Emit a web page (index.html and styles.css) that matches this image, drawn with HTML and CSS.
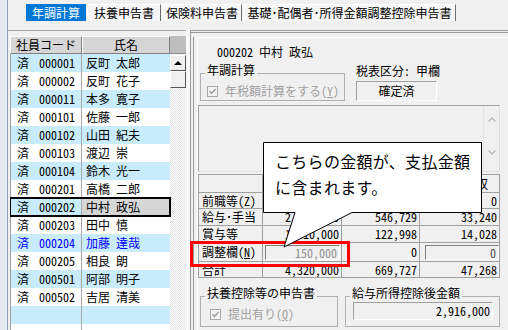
FILE: index.html
```html
<!DOCTYPE html>
<html lang="ja">
<head>
<meta charset="utf-8">
<title>年調計算</title>
<link rel="stylesheet" href="styles.css">
</head>
<body>
<div class="app">
  <div class="strip"></div>
  <div class="main">
    <div class="tabs">
      <div class="tab on w1">年調計算</div>
      <div class="tab w2">扶養申告書</div>
      <div class="tab w3">保険料申告書</div>
      <div class="tab w4">基礎･配偶者･所得金額調整控除申告書</div>
    </div>
    <div class="content">
      <div class="listpane">
        <div class="ghead">
          <div class="hc hc1">社員コード</div>
          <div class="hc hc2">氏名</div>
          <div class="hfill"></div>
        </div>
        <div class="gbody">
          <div class="rows">
            <div class="row alt"><div class="c1"><span>済</span><span class="cd">000001</span></div><div class="c2">反町 太郎</div></div>
            <div class="row"><div class="c1"><span>済</span><span class="cd">000002</span></div><div class="c2">反町 花子</div></div>
            <div class="row alt"><div class="c1"><span>済</span><span class="cd">000011</span></div><div class="c2">本多 寛子</div></div>
            <div class="row"><div class="c1"><span>済</span><span class="cd">000101</span></div><div class="c2">佐藤 一郎</div></div>
            <div class="row alt"><div class="c1"><span>済</span><span class="cd">000102</span></div><div class="c2">山田 紀夫</div></div>
            <div class="row"><div class="c1"><span>済</span><span class="cd">000103</span></div><div class="c2">渡辺 崇</div></div>
            <div class="row alt"><div class="c1"><span>済</span><span class="cd">000104</span></div><div class="c2">鈴木 光一</div></div>
            <div class="row"><div class="c1"><span>済</span><span class="cd">000201</span></div><div class="c2">高橋 二郎</div></div>
            <div class="row alt sel"><div class="c1"><span>済</span><span class="cd">000202</span></div><div class="c2">中村 政弘</div></div>
            <div class="row"><div class="c1"><span>済</span><span class="cd">000203</span></div><div class="c2">田中 慎</div></div>
            <div class="row alt blue"><div class="c1"><span>済</span><span class="cd">000204</span></div><div class="c2">加藤 達哉</div></div>
            <div class="row"><div class="c1"><span>済</span><span class="cd">000205</span></div><div class="c2">相良 朗</div></div>
            <div class="row alt"><div class="c1"><span>済</span><span class="cd">000501</span></div><div class="c2">阿部 明子</div></div>
            <div class="row"><div class="c1"><span>済</span><span class="cd">000502</span></div><div class="c2">吉居 清美</div></div>
            <div class="row alt"><div class="c1"></div><div class="c2"></div></div>
            <div class="row"><div class="c1"></div><div class="c2"></div></div>
          </div>
          <div class="vscroll">
            <div class="sbtn"><span class="tri"></span></div>
            <div class="sthumb"></div>
            <div class="strack"></div>
          </div>
        </div>
      </div>
      <div class="splitter"></div>
      <div class="detail">
        <div class="dpanel">
          <div class="dinner">
            <div class="idline">000202 中村 政弘</div>
            <div class="toprow">
              <fieldset class="grp g1">
                <legend>年調計算</legend>
                <div class="chk dis c-g1">
                  <svg class="cb" width="11" height="11" viewBox="0 0 11 11"><rect x="0.5" y="0.5" width="10" height="10" fill="#f4f4f4" stroke="#a8a8a8"/><path d="M2.5 5.2 L4.6 7.4 L8.6 3" fill="none" stroke="#a0a0a0" stroke-width="1.6"/></svg>
                  <span>年税額計算をする(<u>Y</u>)</span>
                </div>
              </fieldset>
              <div class="taxcol">
                <div class="taxlbl">税表区分: 甲欄</div>
                <div class="status">確定済</div>
              </div>
            </div>
            <div class="memo">
              <div class="memo-main"></div>
              <div class="memo-scroll">
                <svg width="8" height="5" viewBox="0 0 8 5"><polyline points="0.5,4.5 4,1 7.5,4.5" fill="none" stroke="#b4b4b4" stroke-width="1.2"/></svg>
                <svg width="8" height="5" viewBox="0 0 8 5"><polyline points="0.5,0.5 4,4 7.5,0.5" fill="none" stroke="#b4b4b4" stroke-width="1.2"/></svg>
              </div>
            </div>
            <div class="amt">
              <div class="lb"></div><div class="hd"></div><div class="hd"></div><div class="hd hd4">徴収</div>
              <div class="lb">前職等(Z)</div><div></div><div></div><div>0</div>
              <div class="lb">給与･手当</div><div>2,760,000</div><div>546,729</div><div>33,240</div>
              <div class="lb">賞与等</div><div>1,410,000</div><div>122,998</div><div>14,028</div>
              <div class="lb">調整欄(<u>N</u>)</div><div class="inb"><span class="ibox gray">150,000</span></div><div>0</div><div class="inb inb4"><span class="ibox">0</span></div>
              <div class="lb">合計</div><div>4,320,000</div><div>669,727</div><div>47,268</div>
            </div>
            <div class="botrow">
              <fieldset class="grp g3">
                <legend>扶養控除等の申告書</legend>
                <div class="chk dis c-g3">
                  <svg class="cb" width="11" height="11" viewBox="0 0 11 11"><rect x="0.5" y="0.5" width="10" height="10" fill="#f4f4f4" stroke="#a8a8a8"/><path d="M2.5 5.2 L4.6 7.4 L8.6 3" fill="none" stroke="#a0a0a0" stroke-width="1.6"/></svg>
                  <span>提出有り(<u>Q</u>)</span>
                </div>
              </fieldset>
              <fieldset class="grp g4">
                <legend>給与所得控除後金額</legend>
                <div class="valbox">2,916,000</div>
              </fieldset>
            </div>
          </div>
        </div>
      </div>
    </div>
  </div>
  <div class="redbox"></div>
  <div class="callout">
    <svg class="callout-shape" width="221" height="106" viewBox="0 0 221 106"><path d="M0.5,0.5 H218.5 V70.5 H89 L21,105 L32,70.5 H0.5 Z" fill="#fff" stroke="#000" stroke-width="1"/></svg>
    <div class="ctext">こちらの金額が、支払金額<br>に含まれます。</div>
  </div>
</div>
</body>
</html>
```

FILE: styles.css
```css
* { box-sizing: border-box; }
html, body { margin: 0; padding: 0; }
body {
  width: 508px;
  height: 330px;
  overflow: hidden;
  background: #f0f0f0;
  font-family: "Noto Sans CJK JP", "Noto Sans", sans-serif;
  font-size: 12px;
  line-height: 14px;
  color: #000;
  font-feature-settings: "hwid" 1;
}
.app { position: relative; display: flex; height: 330px; }
.strip { width: 8px; flex: none; background: #e4eaf1; border-right: 1px solid #8e9fb3; }
.main { flex: 1; display: flex; flex-direction: column; min-width: 0; }

/* tabs */
.tabs { display: flex; height: 17px; margin: 4px 0 9px 18px; flex: none; }
.tab {
  height: 17px;
  border-top: 1px solid #fff;
  border-left: 1px solid #fff;
  border-right: 1px solid #6e6e6e;
  background: #f5f5f5;
  text-align: center;
  line-height: 15px;
  margin-right: 1px;
  white-space: nowrap;
  flex: none;
}
.tab.on { background: #0078d7; color: #fff; border-color: #0078d7; }
.w1 { width: 60px; }
.w2 { width: 74px; }
.w3 { width: 80px; }
.w4 { width: 213px; }

.content { flex: 1; display: flex; min-height: 0; }

/* employee list */
.listpane {
  width: 178px; flex: none;
  border-top: 1px solid #a0a0a0;
  padding: 5px 0 0 2px;
  display: flex; flex-direction: column;
  overflow: hidden;
}
.ghead { display: flex; height: 18px; flex: none; }
.hc {
  height: 18px;
  background: #d6d6d6;
  border-top: 1px solid #fff;
  border-left: 1px solid #fff;
  border-right: 1px solid #808080;
  border-bottom: 1px solid #808080;
  text-align: center;
  line-height: 16px;
}
.hc1 { width: 72px; }
.hc2 { width: 88px; }
.hfill { width: 16px; background: #bebebe; border-bottom: 1px solid #909090; }
.gbody { flex: 1; display: flex; min-height: 0; overflow: hidden; }
.rows { width: 160px; flex: none; }
.row { display: flex; height: 18px; background: #fff; line-height: 18px; }
.row.alt { background: #c8ecfb; }
.row.blue { color: #0000ff; }
.c1 {
  width: 72px; flex: none;
  border-left: 1px solid #a0a0a0;
  border-right: 1px solid #a8a8a8;
  padding-left: 6px;
  white-space: nowrap;
}
.cd { margin-left: 10px; }
.c2 { width: 88px; flex: none; padding-left: 4px; white-space: nowrap; }
.row.sel { position: relative; z-index: 1; outline: 2px solid #000; outline-offset: -1px; }
.row.sel .c2 { background: #d6d6d6; }

.vscroll { width: 16px; flex: none; display: flex; flex-direction: column; }
.sbtn {
  margin-top: 1px; height: 16px;
  background: #f0f0f0;
  border: 1px solid; border-color: #fff #555 #555 #fff;
  display: flex; align-items: center; justify-content: center;
}
.tri { width: 0; height: 0; border-left: 4px solid transparent; border-right: 4px solid transparent; border-bottom: 4px solid #000; }
.sthumb { height: 17px; background: #f0f0f0; border: 1px solid; border-color: #fff #555 #555 #fff; }
.strack { flex: 1; background: repeating-conic-gradient(#ffffff 0 25%, #e2e2e2 0 50%) 0 0 / 2px 2px; }

.splitter { width: 5px; flex: none; background: #f8f8f8; border-right: 1px solid #9a9a9a; }

/* detail */
.detail { flex: 1; display: flex; border-top: 3px double #999; padding: 4px 0 0 2px; min-width: 0; }
.dpanel { flex: 1; display: flex; border-left: 1px solid #9a9a9a; padding-left: 3px; }
.dinner { flex: 1; border-top: 1px solid #fff; border-left: 1px solid #fff; }
.idline { margin-top: 7px; padding-left: 19px; height: 14px; white-space: nowrap; }
.toprow { display: flex; align-items: flex-start; }

.grp { margin: 0; padding: 0; border: 1px solid #b0b0b0; min-width: 0; }
.grp legend { padding: 0 2px 6px; margin-left: 4px; line-height: 14px; white-space: nowrap; }
.g1 { margin: 4px 0 0 2px; width: 145px; }
.g3 { margin-left: 2px; width: 138px; }
.g4 { margin-left: 7px; width: 155px; }
.chk { display: flex; align-items: center; height: 16px; gap: 7px; white-space: nowrap; }
.c-g1 { padding-left: 6px; margin-bottom: 1px; }
.c-g3 { padding-left: 9px; margin-bottom: 4px; }
.dis { color: #a0a0a0; }
.cb { flex: none; }

.taxcol { margin: 5px 0 0 11px; }
.taxlbl { height: 14px; white-space: nowrap; }
.status {
  width: 81px; height: 20px; margin-top: 3px;
  border: 1px solid; border-color: #a0a0a0 #fff #fff #a0a0a0;
  text-align: center; line-height: 18px;
}

.memo {
  margin-top: 4px; width: 302px; height: 67px;
  display: flex;
  border: 1px solid; border-color: #a0a0a0 #e0e0e0 #e0e0e0 #a0a0a0;
}
.memo-main { flex: 1; }
.memo-scroll {
  width: 16px; border-left: 1px solid #e4e4e4;
  display: flex; flex-direction: column; align-items: center; justify-content: space-between;
  padding: 11px 0 16px;
}

.amt {
  margin-top: 2px; width: 302px;
  display: grid;
  grid-template-columns: 64px 79px 78px 80px;
  grid-template-rows: 18px 16px 17px 17px 19px 16px;
  border-top: 1px solid #a0a0a0;
  border-left: 1px solid #a0a0a0;
}
.amt > div {
  border-right: 1px solid #a0a0a0;
  border-bottom: 1px solid #a0a0a0;
  display: flex; align-items: center; justify-content: flex-end;
  padding-right: 2px;
  white-space: nowrap;
  overflow: hidden;
}
.amt > .lb { justify-content: flex-start; padding-left: 3px; }
.amt > .hd { justify-content: center; padding-right: 0; }
.amt > .hd4 { justify-content: flex-end; padding-right: 11px; }
.amt > .inb { padding: 0 1px 0 2px; }
.amt > .inb4 { padding: 0 0 0 5px; }
.ibox {
  flex: 1; height: 15px;
  border: 1px solid; border-color: #808080 #fff #fff #808080;
  text-align: right; padding-right: 2px; line-height: 13px;
  color: #505050;
}
.ibox.gray { color: #909090; }

.botrow { display: flex; align-items: flex-start; margin-top: 8px; }
.valbox {
  height: 18px; margin: -4px 6px 6px 7px;
  border: 1px solid; border-color: #a0a0a0 #fff #fff #a0a0a0;
  text-align: right; padding-right: 2px; line-height: 16px;
}

/* overlays */
.redbox { position: absolute; left: 190px; top: 241px; width: 160px; height: 26px; border: 3px solid #ff0000; }
.callout { position: absolute; left: 263px; top: 142px; width: 221px; height: 106px; }
.callout-shape { position: absolute; left: 0; top: 0; }
.ctext { position: relative; padding: 6px 0 0 12px; font-size: 16px; line-height: 26px; letter-spacing: 0.3px; white-space: nowrap; }
```
